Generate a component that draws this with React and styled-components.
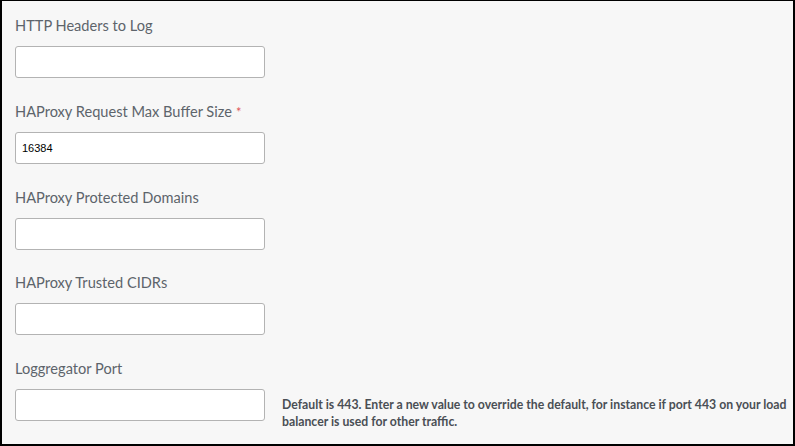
import React from 'react';
import styled, { createGlobalStyle } from 'styled-components';

const GlobalStyle = createGlobalStyle`
  html, body {
    margin: 0;
    padding: 0;
    background: #f7f7f7;
  }
  * {
    box-sizing: border-box;
  }
`;

const fields = [
  { label: 'HTTP Headers to Log', value: '' },
  { label: 'HAProxy Request Max Buffer Size', value: '16384', required: true },
  { label: 'HAProxy Protected Domains', value: '' },
  { label: 'HAProxy Trusted CIDRs', value: '' },
  {
    label: 'Loggregator Port',
    value: '',
    help: 'Default is 443. Enter a new value to override the default, for instance if port 443 on your load balancer is used for other traffic.',
  },
];

const App = () => (
  <>
    <GlobalStyle />
    <Page>
      {fields.map((f) => (
        <Field key={f.label}>
          <Label>
            {f.label}
            {f.required && <Required>*</Required>}
          </Label>
          <InputRow>
            <TextInput type="text" defaultValue={f.value} />
            {f.help && <Help>{f.help}</Help>}
          </InputRow>
        </Field>
      ))}
    </Page>
  </>
);

const Page = styled.div`
  width: 795px;
  height: 446px;
  background: #f7f7f7;
  border: 2px solid #000;
  border-top-width: 1px;
  padding: 15px 6px 0 13px;
  display: flex;
  flex-direction: column;
  gap: 23.75px;
  overflow: hidden;
`;

const Field = styled.div`
  display: flex;
  flex-direction: column;
  gap: 10px;
`;

const Label = styled.div`
  font-family: 'Lato', 'Open Sans', sans-serif;
  font-size: 14.6px;
  line-height: 20px;
  color: #5d646b;
`;

const Required = styled.span`
  color: #e0575b;
  margin-left: 4px;
  font-size: 13px;
  vertical-align: top;
`;

const InputRow = styled.div`
  display: flex;
  align-items: flex-start;
  gap: 17px;
`;

const TextInput = styled.input`
  flex: 0 0 250px;
  width: 250px;
  height: 32px;
  border: 1px solid #b3b3b3;
  border-radius: 3px;
  background: #fff;
  padding: 0 6px;
  font-family: 'Liberation Sans', Arial, sans-serif;
  font-size: 11px;
  color: #000;
  outline: none;
`;

const Help = styled.div`
  flex: 1;
  margin-top: 6.5px;
  font-family: 'Lato', 'Open Sans', sans-serif;
  font-size: 12.25px;
  font-weight: 700;
  line-height: 17px;
  color: #4a4f55;
`;

export default App;
